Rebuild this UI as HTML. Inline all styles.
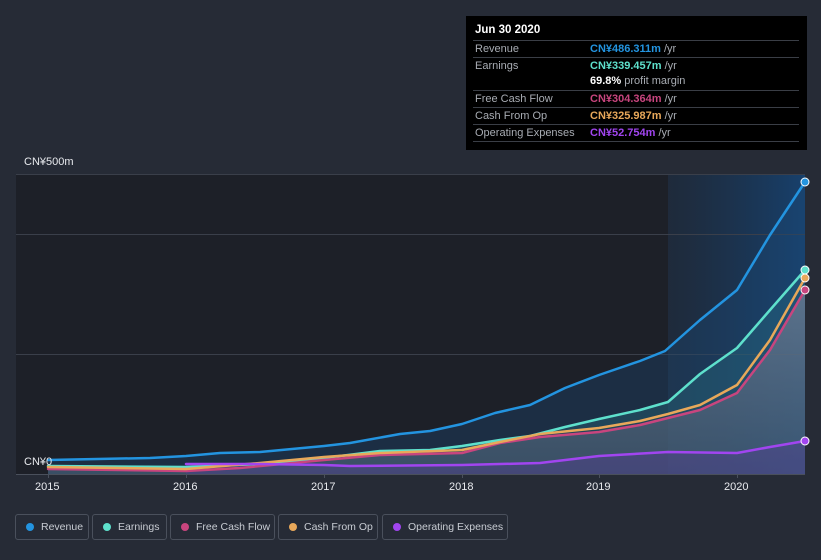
<!DOCTYPE html>
<html><head><meta charset="utf-8"><style>
body{margin:0;width:821px;height:560px;background:#262b36;font-family:"Liberation Sans",sans-serif;overflow:hidden;position:relative}
.tt{position:absolute;left:466px;top:16px;width:341px;height:134px;background:#000;color:#fff;font-size:11px}
.tt .h{position:absolute;left:9px;top:8px;font-weight:bold;font-size:11.5px}
.row{position:absolute;left:7px;width:326px;border-top:1px solid #3a3e46;height:16px;line-height:16px}
.row .l{position:absolute;left:2px;color:#a8acb3}
.row .v{position:absolute;left:117px;font-weight:bold}
.row .v span{color:#a8acb3;font-weight:normal}
.ax{position:absolute;color:#e8eaee;font-size:11px}
.lg{position:absolute;top:514px;height:26px;border:1px solid #4a505c;border-radius:3px;color:#c8ccd3;font-size:10.5px;line-height:24px;box-sizing:border-box;white-space:nowrap}
.lg i{position:absolute;left:10px;top:8px;width:8px;height:8px;border-radius:50%}
.lg b{font-weight:normal;position:absolute;left:25px}
</style></head><body>
<svg width="821" height="560" style="position:absolute;left:0;top:0">
<defs>
<linearGradient id="hl" x1="0" x2="1"><stop offset="0" stop-color="#1a2a3e" stop-opacity="0.6"/><stop offset="1" stop-color="#17406c"/></linearGradient>
<linearGradient id="gf" x1="0" y1="0" x2="0" y2="1"><stop offset="0" stop-color="#7a8296" stop-opacity="0.9"/><stop offset="1" stop-color="#505870" stop-opacity="0.7"/></linearGradient>
</defs>
<rect x="16" y="174" width="652" height="300" fill="#1d2028"/>
<rect x="668" y="174" width="137" height="300" fill="url(#hl)"/>
<g stroke="#3a3f4a" stroke-width="1"><line x1="16" y1="174.5" x2="805" y2="174.5"/><line x1="16" y1="234.5" x2="805" y2="234.5"/><line x1="16" y1="354.5" x2="805" y2="354.5"/><line x1="16" y1="474.5" x2="805" y2="474.5" stroke="#4a505c"/></g>
<g stroke="#4a505c"><line x1="48.5" y1="474" x2="48.5" y2="478"/><line x1="186.5" y1="474" x2="186.5" y2="478"/><line x1="324.5" y1="474" x2="324.5" y2="478"/><line x1="462.5" y1="474" x2="462.5" y2="478"/><line x1="599.5" y1="474" x2="599.5" y2="478"/><line x1="737.5" y1="474" x2="737.5" y2="478"/></g>
<path d="M48,460 L150,458 186,456 220,453 260,452 324,446 350,443 400,434 430,431 462,424 495,413 530,405 565,388 599,375 640,361 665,351 700,320 737,290 770,235 805,182 L805,474 48,474Z" fill="#1c4a78" opacity="0.35"/>
<path d="M48,466 L186,467 260,464 324,458 380,451 430,450 462,446 500,440 530,436 565,427 599,419 640,410 668,402 700,374 737,348 770,310 805,270 L805,474 48,474Z" fill="#2a7a8a" opacity="0.3"/>
<path d="M48,469 L186,471 240,468 324,460 380,455 462,453 500,443 540,437 599,432 640,425 668,418 700,410 737,393 770,350 805,290 L805,474 48,474Z" fill="url(#gf)" opacity="0.75"/>
<path d="M186,464 L260,464 324,465 350,466 462,465 540,463 599,456 668,452 737,453 770,447 805,441 L805,474 186,474Z" fill="#5a3a9a" opacity="0.35"/>
<g fill="none" stroke-width="2.5" stroke-linejoin="round" stroke-linecap="round">
<path d="M48,460 L150,458 186,456 220,453 260,452 324,446 350,443 400,434 430,431 462,424 495,413 530,405 565,388 599,375 640,361 665,351 700,320 737,290 770,235 805,182" stroke="#2394e0"/>
<path d="M48,466 L186,467 260,464 324,458 380,451 430,450 462,446 500,440 530,436 565,427 599,419 640,410 668,402 700,374 737,348 770,310 805,270" stroke="#5ee0cc"/>
<path d="M48,469 L186,471 240,468 324,460 380,455 462,453 500,443 540,437 599,432 640,425 668,418 700,410 737,393 770,350 805,290" stroke="#c8457e"/>
<path d="M48,467 L186,469 260,463 324,457 380,453 462,450 500,442 540,434 599,428 640,421 668,414 700,405 737,385 770,340 805,278" stroke="#e8a85a"/>
<path d="M186,464 L260,464 324,465 350,466 462,465 540,463 599,456 668,452 737,453 770,447 805,441" stroke="#a145f0"/>
</g>
<g stroke="#fff" stroke-width="1"><circle cx="805" cy="182" r="4" fill="#2394e0"/><circle cx="805" cy="270" r="4" fill="#5ee0cc"/><circle cx="805" cy="278" r="4" fill="#e8a85a"/><circle cx="805" cy="290" r="4" fill="#c8457e"/><circle cx="805" cy="441" r="4" fill="#a145f0"/></g>
</svg>
<div class="ax" style="left:24px;top:156px">CN¥500m</div>
<div class="ax" style="left:24px;top:456px">CN¥0</div>
<div class="ax" style="left:35px;top:481px">2015</div>
<div class="ax" style="left:173px;top:481px">2016</div>
<div class="ax" style="left:311px;top:481px">2017</div>
<div class="ax" style="left:449px;top:481px">2018</div>
<div class="ax" style="left:586px;top:481px">2019</div>
<div class="ax" style="left:724px;top:481px">2020</div>
<div class="tt"><div class="h">Jun 30 2020</div>
<div class="row" style="top:24px"><span class="l">Revenue</span><span class="v" style="color:#2394e0">CN¥486.311m <span>/yr</span></span></div>
<div class="row" style="top:41px"><span class="l">Earnings</span><span class="v" style="color:#5ee0cc">CN¥339.457m <span>/yr</span></span></div>
<div class="row" style="top:57px;border-top:none"><span class="v" style="color:#fff">69.8% <span>profit margin</span></span></div>
<div class="row" style="top:74px"><span class="l">Free Cash Flow</span><span class="v" style="color:#c8457e">CN¥304.364m <span>/yr</span></span></div>
<div class="row" style="top:91px"><span class="l">Cash From Op</span><span class="v" style="color:#e8a85a">CN¥325.987m <span>/yr</span></span></div>
<div class="row" style="top:108px;border-bottom:1px solid #3a3e46"><span class="l">Operating Expenses</span><span class="v" style="color:#a145f0">CN¥52.754m <span>/yr</span></span></div>
</div>
<div class="lg" style="left:15px;width:74px"><i style="background:#2394e0"></i><b>Revenue</b></div>
<div class="lg" style="left:92px;width:75px"><i style="background:#5ee0cc"></i><b>Earnings</b></div>
<div class="lg" style="left:170px;width:105px"><i style="background:#c8457e"></i><b>Free Cash Flow</b></div>
<div class="lg" style="left:278px;width:100px"><i style="background:#e8a85a"></i><b>Cash From Op</b></div>
<div class="lg" style="left:382px;width:126px"><i style="background:#a145f0"></i><b>Operating Expenses</b></div>
</body></html>
